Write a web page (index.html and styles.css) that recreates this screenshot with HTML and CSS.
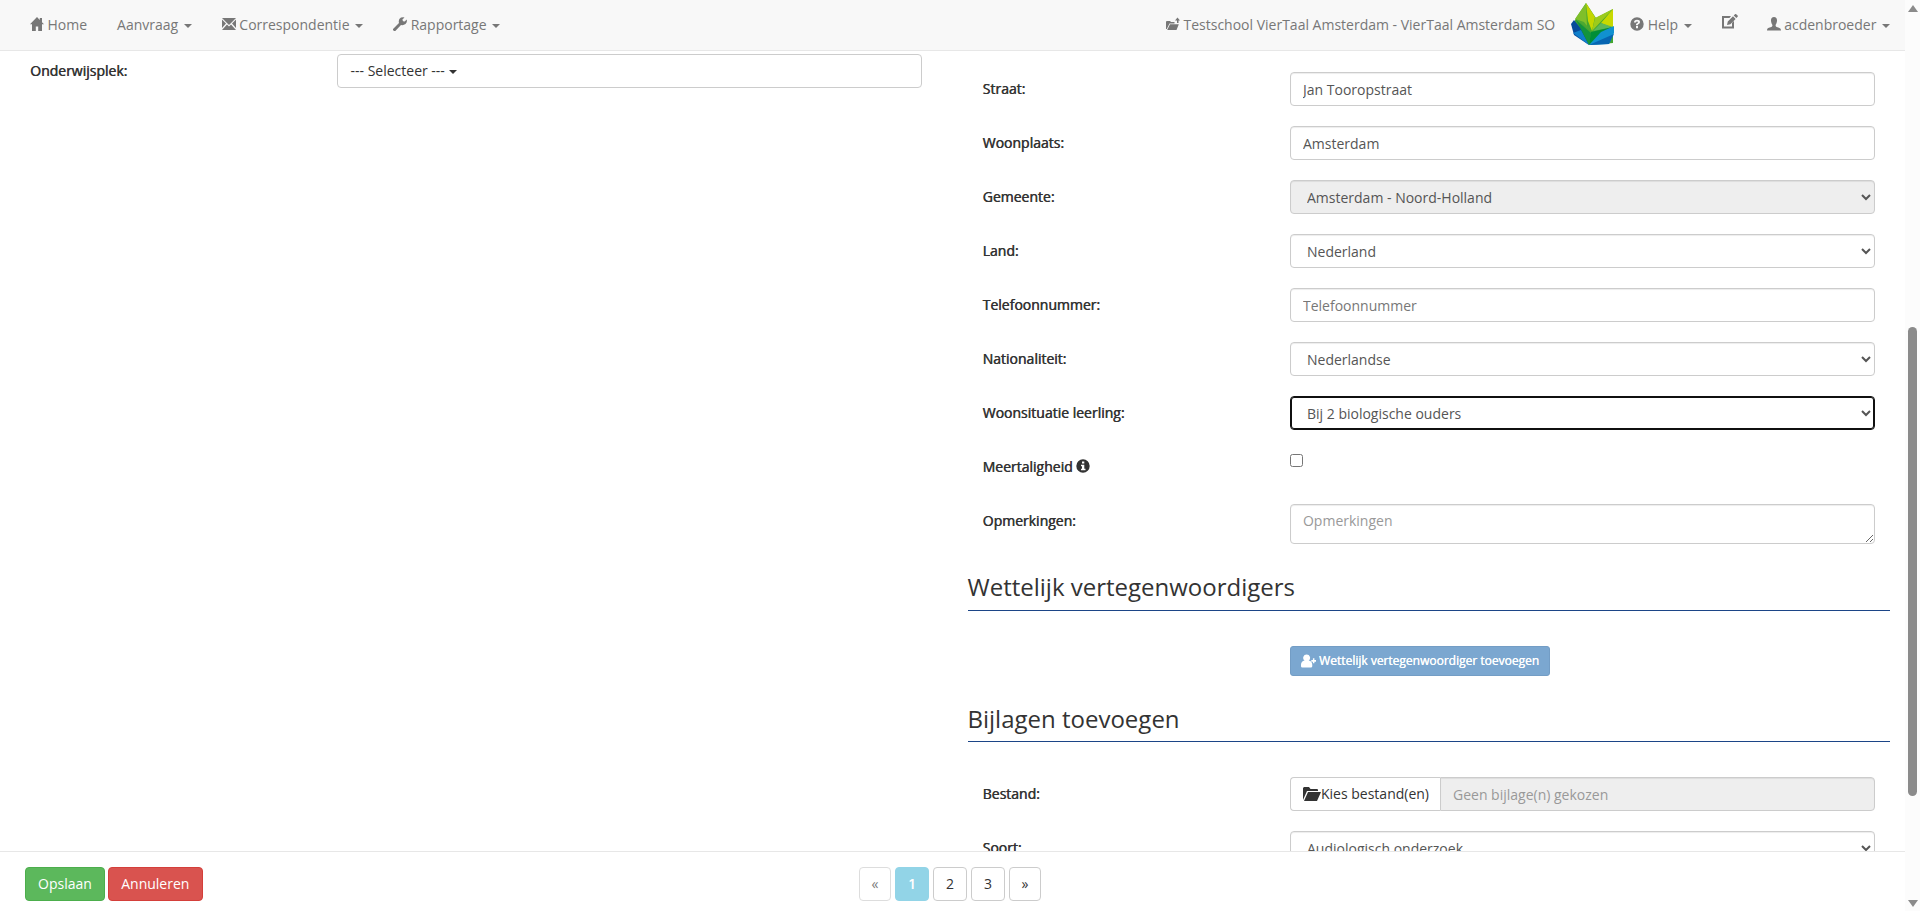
FILE: index.html
```html
<!DOCTYPE html>
<html lang="nl">

<head>
    <meta charset="UTF-8">
    <meta name="viewport" content="width=device-width, initial-scale=1.0">
    <title>Aanvraag</title>
    <link rel="stylesheet" href="styles.css">
</head>

<body>
    <div class="page">
        <nav class="navbar">
            <ul class="nav">
                <li><svg class="icon" viewBox="0 0 14 14"><path d="M7 0 0 7.300h2V14h3.800V9.500h2.400V14H12V7.300h2l-2-2.100V1H9.800v1.900z"/></svg><span class="txt">Home</span></li>
                <li>Aanvraag <b class="caret"></b></li>
                <li><svg class="icon" viewBox="0 0 14 14"><path d="M0 1h14L7 8zM0 2.500l4 4L0 11zM14 2.500l-4 4L14 11zM0 13l5-5.500 2 2 2-2L14 13z"/></svg><span class="txt">Correspondentie</span> <b class="caret"></b></li>
                <li><svg class="icon" viewBox="0 0 14 14"><path d="M0 12 6 6Q5 2 8 .6 10 0 11.500.4L9.400 2.600 10 4.300 11.700 4.600 13.700 2.500Q14.500 5 12.500 7 10.500 8.600 8 8L2.300 14H1L0 13z"/></svg><span class="txt">Rapportage</span> <b class="caret"></b></li>
            </ul>
            <ul class="nav nav-right">
                <li class="school"><svg class="icon icon-school" viewBox="0 0 14 14"><path d="M0 5q0-1 1-1h3l1 1h3.500v1.500H3.500L.8 12H0zM4 7.300h8.800L10.500 13H1.200zM11 6V3.500H9L11.500.5 14 3.500h-1.500V6z"/></svg><span class="txt">Testschool VierTaal Amsterdam - VierTaal Amsterdam SO</span></li>
                <li class="brand">
                    <svg class="logo" viewBox="0 0 43 42">
                        <path fill="#43a62f" d="M15 0 5 15 3 20 18 42 42 40V6L25 15z"/>
                        <path fill="#064b9b" d="M3 17 0 21 3 32 18 42 12 28z"/>
                        <path fill="#0f7fcb" d="M2 30 18 42 10 27z"/>
                        <path fill="#7fbf2a" d="M15 0 4 16 16 23z"/>
                        <path fill="#4da832" d="M4 16 20 28 13 19z"/>
                        <path fill="#c4d600" d="M15 0 24 14 21 28 17 18z"/>
                        <path fill="#9ccb1c" d="M42 6 24 15 21 28z"/>
                        <path fill="#13933d" d="M5 17 20 30 18 42z"/>
                        <path fill="#c8d900" d="M42 6V25L30 20z"/>
                        <path fill="#5cb85a" d="M22 28 30 20 42 24z"/>
                        <path fill="#008e36" d="M20 29 42 24 18 42z"/>
                        <path fill="#1191d0" d="M43 23 30 29 18 42 38 41 43 30z"/>
                        <path fill="#0665b2" d="M43 31 18 42 38 41z"/>
                    </svg>
                </li>
                <li class="help"><svg class="icon" viewBox="0 0 14 14"><path fill-rule="evenodd" d="M7 .3a6.700 6.700 0 1 0 0 13.400A6.700 6.700 0 0 0 7 .3zM6 9h2v2.200H6zM4 5.500Q4 2.800 7 2.800T10 5.200Q10 6.500 8 7.500V8.200H6V7Q8 6 8 5.200 8 4.500 7 4.500T6 5.500z"/></svg><span class="txt">Help</span> <b class="caret"></b></li>
                <li class="edit"><svg class="icon icon-edit" viewBox="0 0 17 16"><path fill-rule="evenodd" d="M1 2h9L8.500 4H3v8.500h8V9l2-2v7.500H1zM6 11l.8-3.500L12 2.300 14.600 5 9.400 10.200zM12.700 1.500 14 .2q.6-.5 1.200 0L16.600 1.600q.5.600 0 1.200L15.400 4.100z"/></svg></li>
                <li class="user"><svg class="icon" viewBox="0 0 14 14"><path d="M7 0C4.800 0 3.800 1.500 4 4 4.200 6 5 7 5.400 8 5.500 9.500 5 9.800 3.500 10.300 1 11 0 11.500 0 13.500h14C14 11.500 13 11 10.500 10.300 9 9.800 8.500 9.500 8.600 8 9 7 9.800 6 10 4 10.200 1.500 9.200 0 7 0z"/></svg><span class="txt">acdenbroeder</span> <b class="caret"></b></li>
            </ul>
        </nav>

        <main class="content">
            <section class="col col-left">
                <div class="form-group">
                    <label class="label">Onderwijsplek:</label>
                    <div class="field"><button class="form-control dropdown">--- Selecteer --- <b class="caret"></b></button></div>
                </div>
            </section>

            <section class="col col-right">
                <div class="form-group">
                    <label class="label">Straat:</label>
                    <div class="field"><input class="form-control" type="text" value="Jan Tooropstraat"></div>
                </div>
                <div class="form-group">
                    <label class="label">Woonplaats:</label>
                    <div class="field"><input class="form-control" type="text" value="Amsterdam"></div>
                </div>
                <div class="form-group">
                    <label class="label">Gemeente:</label>
                    <div class="field"><select class="form-control readonly"><option>Amsterdam - Noord-Holland</option></select></div>
                </div>
                <div class="form-group">
                    <label class="label">Land:</label>
                    <div class="field"><select class="form-control"><option>Nederland</option></select></div>
                </div>
                <div class="form-group">
                    <label class="label">Telefoonnummer:</label>
                    <div class="field"><input class="form-control dark-placeholder" type="text" placeholder="Telefoonnummer"></div>
                </div>
                <div class="form-group">
                    <label class="label">Nationaliteit:</label>
                    <div class="field"><select class="form-control"><option>Nederlandse</option></select></div>
                </div>
                <div class="form-group">
                    <label class="label">Woonsituatie leerling:</label>
                    <div class="field"><select class="form-control active"><option>Bij 2 biologische ouders</option></select></div>
                </div>
                <div class="form-group">
                    <label class="label">Meertaligheid <svg class="icon icon-info" viewBox="0 0 14 14"><path fill-rule="evenodd" d="M7 .3a6.700 6.700 0 1 0 0 13.400A6.700 6.700 0 0 0 7 .3zM6 2.500h2.300v2H6zM5 5.700h3.300v4H9.500v1.500H5V9.700h1V7.200H5z"/></svg></label>
                    <div class="field"><input class="check" type="checkbox"></div>
                </div>
                <div class="form-group">
                    <label class="label">Opmerkingen:</label>
                    <div class="field"><textarea class="form-control remarks" placeholder="Opmerkingen"></textarea></div>
                </div>

                <h2 class="title">Wettelijk vertegenwoordigers</h2>
                <div class="form-group add-row">
                    <div class="field">
                        <button class="btn-add"><svg class="icon-add" viewBox="0 0 16 16"><path d="M6 1a3.600 3.600 0 0 0-2.200 6.500Q0 8.500 0 12v1.500Q0 15 1.500 15h9q1.500 0 1.500-1.500V12Q12 8.500 8.200 7.500A3.600 3.600 0 0 0 6 1zM11 7h1.700V5.200h1.600V7H16v1.700h-1.700v1.800h-1.600V8.700H11z"/></svg><span class="txt">Wettelijk vertegenwoordiger toevoegen</span></button>
                    </div>
                </div>

                <h2 class="title">Bijlagen toevoegen</h2>
                <div class="form-group">
                    <label class="label">Bestand:</label>
                    <div class="field file">
                        <button class="btn-file"><svg class="icon-folder" viewBox="0 0 18 16"><path d="M0 14V2l1-1h5l1.500 2H14q1 0 1 1v1H4zM1 15 5 6h13l-4 9z"/></svg>Kies bestand(en)</button>
                        <input class="form-control file-name" type="text" placeholder="Geen bijlage(n) gekozen" readonly>
                    </div>
                </div>
                <div class="form-group">
                    <label class="label">Soort:</label>
                    <div class="field"><select class="form-control"><option>Audiologisch onderzoek</option></select></div>
                </div>
            </section>
        </main>

        <footer class="footer">
            <div class="actions">
                <button class="btn btn-success">Opslaan</button>
                <button class="btn btn-danger">Annuleren</button>
            </div>
            <div class="pager">
                <button class="btn btn-page arrow off">«</button>
                <button class="btn btn-page current">1</button>
                <button class="btn btn-page">2</button>
                <button class="btn btn-page">3</button>
                <button class="btn btn-page arrow">»</button>
            </div>
        </footer>
    </div>

    <div class="scrollbar">
        <span class="arrow-up"></span>
        <span class="thumb"></span>
        <span class="arrow-down"></span>
    </div>
</body>

</html>
```

FILE: styles.css
```css
* {
    box-sizing: border-box;
}

body {
    margin: 0;
    height: 911px;
    display: flex;
    overflow: hidden;
    background-color: #fff;
    color: #333;
    font-family: "Open Sans", sans-serif;
    font-size: 14px;
    line-height: 20px;
}

button,
input,
select,
textarea {
    font-family: inherit;
    font-size: inherit;
    line-height: inherit;
}

.page {
    width: 1905px;
    height: 911px;
    display: flex;
    flex-direction: column;
}

/* navbar */
.navbar {
    flex: none;
    height: 51px;
    display: flex;
    justify-content: space-between;
    padding: 0 15px;
    background-color: #f8f8f8;
    border-bottom: 1px solid #e7e7e7;
    color: #777;
}

.nav {
    display: flex;
    margin: 0;
    padding: 0;
    list-style: none;
}

.nav li {
    padding: 15px;
    white-space: nowrap;
}

.nav-right li {
    padding: 15px 14px 15px 15px;
}

.nav .school {
    padding-right: 16px;
}

.nav .brand {
    padding: 3px 2px 0 0;
}

.nav .help {
    padding: 15px 15px 15px 14px;
}

.nav .edit {
    padding: 14px 14px;
}

.nav .user {
    padding-right: 0;
}

.icon {
    width: 14px;
    height: 14px;
    fill: currentColor;
    vertical-align: -1px;
}

.icon + .txt {
    margin-left: 3.500px;
}

.icon-edit {
    width: 17px;
    height: 16px;
}

.logo {
    display: block;
    width: 43px;
    height: 42px;
}

.caret {
    display: inline-block;
    margin-left: 2px;
    vertical-align: middle;
    border-top: 4px solid;
    border-left: 4px solid transparent;
    border-right: 4px solid transparent;
}

/* form */
.content {
    flex: 1;
    min-height: 0;
    display: flex;
    overflow: hidden;
}

.col {
    width: 50%;
    padding: 0 15px;
}

.col-left {
    padding-top: 3px;
}

.col-right {
    padding-top: 21px;
}

.form-group {
    display: flex;
    height: 34px;
    margin-bottom: 20px;
}

.label {
    width: 33.3333%;
    padding: 7px 15px 0;
    text-shadow: 0.5px 0 0 #333;
}

.field {
    width: 66.6667%;
    padding: 0 15px;
}

.form-control {
    display: block;
    width: 100%;
    height: 34px;
    padding: 6px 12px;
    background-color: #fff;
    border: 1px solid #ccc;
    border-radius: 4px;
    box-shadow: inset 0 1px 1px rgba(0, 0, 0, 0.075);
    color: #555;
    outline: none;
}

.form-control::placeholder {
    color: #999;
}

.dark-placeholder::placeholder {
    color: #777;
}

.dropdown {
    color: #333;
    text-align: left;
    box-shadow: none;
}

.dropdown .caret {
    margin-left: 0;
}

.readonly {
    background-color: #eee;
}

.active {
    border-color: #101010;
    box-shadow: inset 0 0 0 1px #101010;
}

.check {
    display: block;
    width: 13px;
    height: 13px;
    margin: 4px 0 0;
}

.remarks {
    height: 40px;
    resize: vertical;
}

.title {
    height: 46px;
    margin: 27px 0 35px;
    padding-top: 9px;
    border-bottom: 1px solid #1c4587;
    font-size: 24px;
    font-weight: 400;
    line-height: 26px;
}

.add-row {
    height: 30px;
    justify-content: flex-end;
    margin-bottom: 0;
}

.add-row + .title {
    margin-top: 20px;
    padding-top: 10px;
}

.btn-add {
    display: flex;
    align-items: center;
    width: 260px;
    height: 30px;
    padding: 0 10px;
    background-color: #7ba7d0;
    border: 1px solid #739dc5;
    border-radius: 3px;
    color: #fff;
    font-size: 12px;
    white-space: nowrap;
    text-shadow: 0.3px 0 0 #fff;
}

.icon-add {
    width: 16px;
    height: 16px;
    margin-right: 3px;
    fill: #fff;
}

.file {
    display: flex;
}

.btn-file {
    flex: none;
    display: flex;
    align-items: center;
    width: 150px;
    padding: 0 0 0 12px;
    background-color: #fff;
    border: 1px solid #ccc;
    border-right: 0;
    border-radius: 4px 0 0 4px;
    color: #333;
    white-space: nowrap;
}

.icon-folder {
    width: 18px;
    height: 16px;
    fill: #333;
}

.file-name {
    flex: 1;
    width: auto;
    background-color: #eee;
    border-radius: 0 4px 4px 0;
}

/* footer */
.footer {
    flex: none;
    position: relative;
    height: 60px;
    display: flex;
    justify-content: center;
    padding-top: 15px;
    background-color: #fff;
    border-top: 1px solid #e7e7e7;
}

.actions {
    position: absolute;
    left: 25px;
    top: 15px;
    display: flex;
    gap: 3px;
}

.pager {
    display: flex;
    gap: 4px;
    margin-right: 5px;
}

.btn {
    height: 34px;
    padding: 0 12px;
    border: 1px solid #ccc;
    border-radius: 4px;
    background-color: #fff;
    color: #333;
}

.btn-success {
    background-color: #5cb85c;
    border-color: #4cae4c;
    color: #fff;
}

.btn-danger {
    width: 95px;
    background-color: #d9534f;
    border-color: #d43f3a;
    color: #fff;
}

.btn-page {
    width: 34px;
    padding: 0;
}

.pager .arrow {
    width: 32px;
}

.off {
    opacity: 0.65;
}

.current {
    background-color: #92d4e7;
    border-color: #92d4e7;
    color: #fff;
    text-shadow: 0.5px 0 0 #fff;
}

/* scrollbar strip */
.scrollbar {
    width: 15px;
    display: flex;
    flex-direction: column;
    align-items: center;
    padding: 5px 0 4px;
    background-color: #fcfcfc;
}

.arrow-up,
.arrow-down {
    border-left: 5px solid transparent;
    border-right: 5px solid transparent;
}

.arrow-up {
    border-bottom: 7px solid #8b8b8b;
}

.arrow-down {
    margin-top: auto;
    border-top: 7px solid #8b8b8b;
}

.thumb {
    width: 9px;
    height: 469px;
    margin-top: 315px;
    border-radius: 5px;
    background-color: #8b8b8b;
}
```
